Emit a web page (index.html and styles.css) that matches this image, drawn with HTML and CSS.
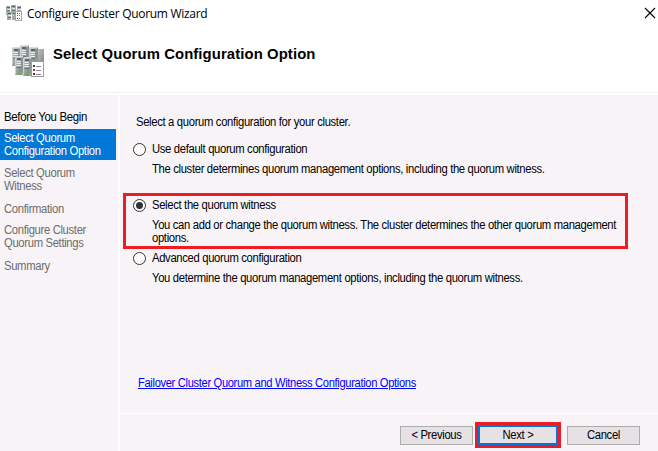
FILE: index.html
```html
<!DOCTYPE html>
<html lang="en">
<head>
<meta charset="utf-8">
<title>Configure Cluster Quorum Wizard</title>
<link rel="stylesheet" href="styles.css">
</head>
<body>
<svg class="defs" aria-hidden="true">
  <defs>
    <linearGradient id="metal" x1="0" x2="1" y1="0" y2="1">
      <stop offset="0" stop-color="#c3c9c8"/><stop offset="1" stop-color="#7c8484"/>
    </linearGradient>
    <symbol id="server" viewBox="0 0 9 19">
      <path d="M0 1L2 0H8L9 1V18L7 19H0Z" fill="#8d9595"/>
      <rect y="1" width="6" height="18" fill="url(#metal)"/>
      <rect x="1" y="0" width="7" height="1.500" fill="#d8dcdc"/>
      <rect x="2" y="2" width="4" height="2" fill="#5d6768"/>
      <path d="M1.500 5.500H6M1.500 7.500H6M1.500 9.500H6" stroke="#eef1f1"/>
      <path d="M1.500 11.500H6" stroke="#697272"/>
      <path d="M.5 2V18" stroke="#dce0e0" stroke-width=".7"/>
    </symbol>
    <symbol id="cluster" viewBox="0 0 32 32">
      <path d="M24 4H32V20H24Z" fill="url(#metal)"/>
      <use href="#server" x="0" y="2" width="9" height="19"/>
      <use href="#server" x="8" y="0" width="9" height="19"/>
      <use href="#server" x="17" y="2" width="9" height="19"/>
      <use href="#server" x="3" y="11" width="9" height="19"/>
      <use href="#server" x="11" y="12" width="9" height="19"/>
      <rect x="8" y="27" width="2" height="2" fill="#58d51c"/>
      <rect x="16" y="28" width="2" height="2" fill="#58d51c"/>
      <rect x="19.500" y="16.500" width="12" height="15" fill="#fff" stroke="#9a9da0"/>
      <rect x="21" y="20" width="2" height="2" fill="#453a4c"/>
      <rect x="21" y="24" width="2" height="2" fill="#d02339"/>
      <rect x="21" y="28" width="2" height="2" fill="#453a4c"/>
      <path d="M24 21.500H29M24 25.500H29M24 29.500H29" stroke="#8d83a5"/>
    </symbol>
    <symbol id="cluster-small" viewBox="0 0 16 16">
      <path d="M0 1H4V10H0ZM5 0H10V9H5ZM11 1H15V7H11ZM1 7H5V15H1ZM6 7H9V15H6Z" fill="#a4abab"/>
      <path d="M1 2.500H4M6 1.500H9M12 2.500H15M2 8.500H5M7 8.500H9" stroke="#566061"/>
      <path d="M1 4.500H4M6 3.500H9M12 4.500H15M2 10.500H5M7 10.500H8" stroke="#e5e9e9"/>
      <path d="M1 5.500H4M6 5.500H9M2 12.500H5" stroke="#6b7475"/>
      <path d="M3 14.500H4M7 13.500H8" stroke="#58d51c"/>
      <rect x="9.500" y="6.500" width="6" height="9" fill="#fff" stroke="#a4a6a8"/>
      <path d="M11 8.500H12M11 13.500H12" stroke="#453a4c"/>
      <path d="M11 10.500H12" stroke="#e02339"/>
      <path d="M13 8.500H14M13 10.500H14M13 13.500H14" stroke="#8d83a5"/>
    </symbol>
  </defs>
</svg>
<div class="window">
  <div class="titlebar">
    <svg class="title-icon"><use href="#cluster-small"/></svg>
    <span class="title">Configure Cluster Quorum Wizard</span>
    <svg class="close" viewBox="0 0 10 10"><path d="M0 0L10 10M10 0L0 10" stroke="#000" stroke-width="1.100"/></svg>
  </div>
  <header class="header">
    <svg class="header-icon"><use href="#cluster"/></svg>
    <h1>Select Quorum Configuration Option</h1>
  </header>
  <div class="body">
    <nav class="steps">
      <div class="step done"><span class="text">Before You Begin</span></div>
      <div class="step current"><span class="text">Select Quorum<br>Configuration Option</span></div>
      <div class="step"><span class="text">Select Quorum<br>Witness</span></div>
      <div class="step confirm"><span class="text">Confirmation</span></div>
      <div class="step settings"><span class="text">Configure Cluster<br>Quorum Settings</span></div>
      <div class="step"><span class="text">Summary</span></div>
    </nav>
    <div class="main">
      <div class="content">
        <p class="intro text">Select a quorum configuration for your cluster.</p>
        <section class="option">
          <div class="choice"><i class="radio"></i><span class="text">Use default quorum configuration</span></div>
          <p class="desc text">The cluster determines quorum management options, including the quorum witness.</p>
        </section>
        <section class="option marked">
          <div class="choice"><i class="radio on"></i><span class="text">Select the quorum witness</span></div>
          <p class="desc text">You can add or change the quorum witness. The cluster determines the other quorum management<br>options.</p>
        </section>
        <section class="option">
          <div class="choice"><i class="radio"></i><span class="text">Advanced quorum configuration</span></div>
          <p class="desc text">You determine the quorum management options, including the quorum witness.</p>
        </section>
        <a class="help text">Failover Cluster Quorum and Witness Configuration Options</a>
      </div>
      <footer class="footer">
        <div class="button"><span class="text">&lt; Previous</span></div>
        <div class="highlight"><div class="button primary"><span class="text">Next &gt;</span></div></div>
        <div class="button"><span class="text">Cancel</span></div>
      </footer>
    </div>
  </div>
</div>
</body>
</html>
```

FILE: styles.css
```css
* { box-sizing: border-box; }
body { margin: 0; font: 12px/13px "Liberation Sans", Arial, sans-serif; letter-spacing: -0.35px; color: #000; }
p, h1 { margin: 0; }
.text { display: block; transform: scaleX(0.938); transform-origin: left; }
.defs { position: absolute; width: 0; height: 0; }
.window { width: 658px; height: 451px; overflow: hidden; background: #fff; display: flex; flex-direction: column; }
.titlebar { height: 28px; display: flex; align-items: center; padding: 0 3px 0 6px; }
.title-icon { width: 16px; height: 16px; margin-top: -2px; }
.title { margin-left: 5px; font: 12px/16px "Open Sans", "Noto Sans", sans-serif; letter-spacing: -0.3px; white-space: nowrap; }
.close { width: 10px; height: 10px; margin: -2px 0 0 auto; overflow: visible; }
.header { height: 65px; display: flex; padding: 17px 0 0 12px; border-bottom: 1px solid #f4f1f4; }
.header-icon { width: 32px; height: 32px; }
h1 { margin: 1px 0 0 9px; font-size: 14px; line-height: 17px; letter-spacing: 0.1px; white-space: nowrap; transform: scaleX(1.06); transform-origin: left; }
.body { flex: 1; margin-top: 2px; display: flex; gap: 2px; }
.steps { width: 118px; background: #f7f3f7; padding-top: 15px; }
.step { width: 116px; padding-left: 4px; margin-bottom: 10px; color: #6d6d6d; white-space: nowrap; }
.step.done { color: #000; margin-bottom: 0; height: 19px; padding-top: 1px; }
.step.done .text { transform: scaleX(0.953); }
.step.current { height: 31px; padding-top: 3px; background: #0078d7; color: #fff; margin-bottom: 7px; }
.step.confirm { margin-bottom: 8px; }
.main { flex: 1; display: flex; flex-direction: column; background: #f7f3f7; }
.content { height: 318px; padding: 21px 0 0 3px; white-space: nowrap; }
.intro { margin: 0 0 12px 13px; }
.option { width: 505px; height: 44px; padding: 3px 0 0 10px; }
.option:first-of-type { height: 52px; padding-top: 2px; }
.option.marked { height: 56px; padding: 3px 0 0 7px; border: 3px solid #ed1c24; }
.choice { display: flex; align-items: center; height: 13px; gap: 6px; }
.radio { width: 13px; height: 13px; border: 1px solid #333; border-radius: 50%; background: #fff; display: grid; place-items: center; }
.radio.on::after { content: ""; width: 7px; height: 7px; border-radius: 50%; background: #333; }
.desc { margin: 7px 0 0 19px; }
.help { margin: 84px 0 0 15px; width: max-content; color: #00f; text-decoration: underline; transform: scaleX(0.928); }
.footer { flex: 1; border-top: 1px solid #fff; display: flex; align-items: flex-start; padding: 8px 18px 0 280px; }
.button { width: 73px; height: 19px; margin-top: 4px; border: 1px solid #adadad; background: #e5e1e5; text-align: center; line-height: 17px; white-space: nowrap; }
.button .text { transform-origin: center; }
.highlight { width: 86px; height: 26px; margin: 0 6px 0 2px; border: 3px solid #ed1c24; }
.highlight .button { width: 80px; height: 20px; margin: 0; border: 2px solid #0078d7; line-height: 16px; }
```
